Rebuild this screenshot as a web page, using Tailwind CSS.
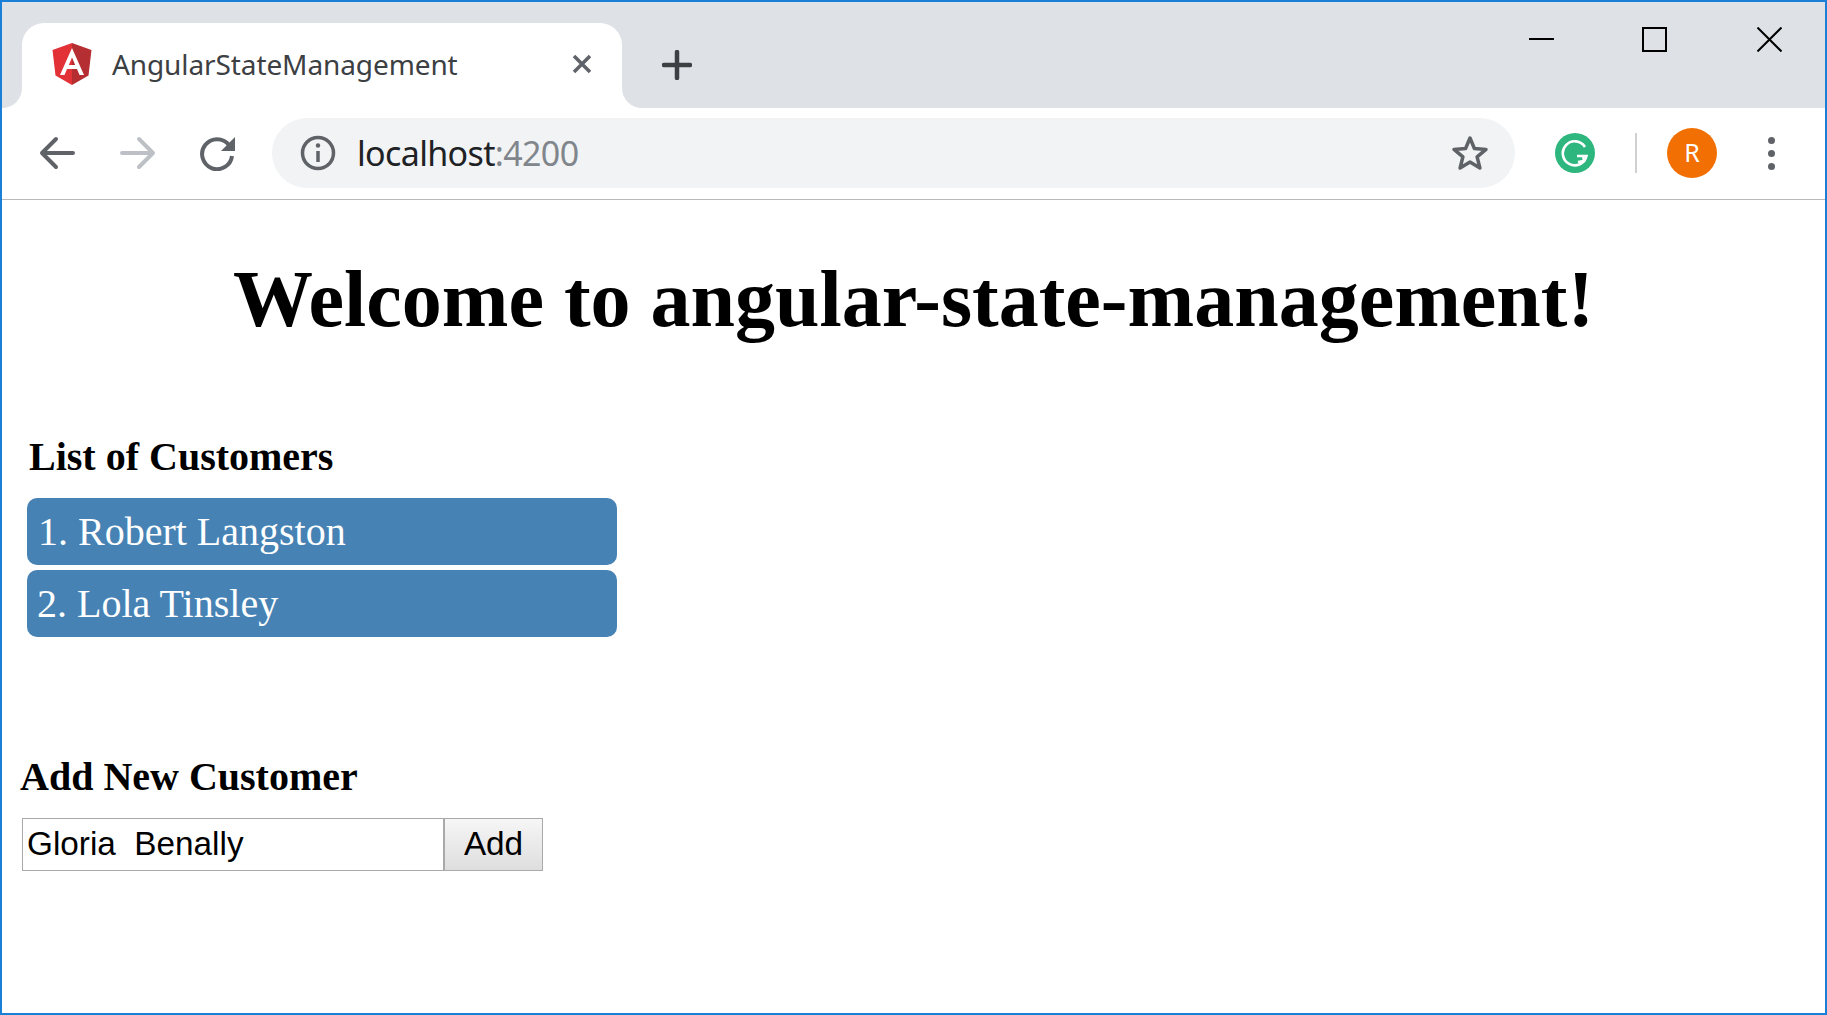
<!DOCTYPE html>
<html lang="en">
  <head>
    <meta charset="UTF-8" />
    <title>AngularStateManagement</title>
    <script src="https://cdn.jsdelivr.net/npm/@tailwindcss/browser@4"></script>
  </head>
  <body class="bg-white overflow-hidden">
    <div class="h-[1015px] box-border border-2 border-[#1a7fd6] flex flex-col font-['Liberation_Serif',serif] text-black">
      <!-- tab strip -->
      <header class="h-[106px] flex bg-white shrink-0">
        <div class="w-[20px] bg-[#dee1e6] rounded-br-[20px]"></div>
        <div class="w-[600px] bg-[#dee1e6] pt-[21px]">
          <div class="h-[85px] bg-white rounded-t-[22px] flex items-center pl-[30px] pb-[3px] font-['Noto_Sans',sans-serif]">
            <svg class="w-[40px] h-[42px] shrink-0" viewBox="0 0 40 42">
              <path d="M20 0 L0.5 7 L3.500 32.500 L20 42 Z" fill="#e23237" />
              <path d="M20 0 L39.500 7 L36.500 32.500 L20 42 Z" fill="#b52e31" />
              <path d="M20 5 L8 32 H12.500 L15 26 H25 L27.500 32 H32 Z M16.800 22 L20 14.500 L23.200 22 Z" fill="#fff" fill-rule="evenodd" />
            </svg>
            <span class="ml-[20px] text-[28px] leading-none text-[#3c4043] w-[460px] whitespace-nowrap tracking-[-0.1px]">AngularStateManagement</span>
            <svg class="w-[20px] h-[20px] shrink-0" viewBox="0 0 20 20" stroke="#5f6368" stroke-width="3.500" fill="none">
              <path d="M2 2 L18 18 M18 2 L2 18" />
            </svg>
          </div>
        </div>
        <div class="flex-1 bg-[#dee1e6] rounded-bl-[20px] flex justify-between">
          <div class="pl-[40px] pt-[48px]">
            <svg class="w-[30px] h-[30px]" viewBox="0 0 30 30" stroke="#3c4043" stroke-width="4.500" stroke-linecap="round" fill="none">
              <path d="M15 2 V28 M2 15 H28" />
            </svg>
          </div>
          <div class="flex pt-[25px] pr-[43px]">
            <svg class="w-[25px] h-[25px]" viewBox="0 0 25 25" stroke="#000" stroke-width="2" fill="none"><path d="M0 12 H25" /></svg>
            <svg class="w-[25px] h-[25px] ml-[88px]" viewBox="0 0 25 25" stroke="#000" stroke-width="2" fill="none"><rect x="1" y="1" width="23" height="23" /></svg>
            <svg class="w-[25px] h-[25px] ml-[90px]" viewBox="0 0 25 25" stroke="#000" stroke-width="2" fill="none"><path d="M0.500 0.500 L24.500 24.500 M24.500 0.500 L0.500 24.500" /></svg>
          </div>
        </div>
      </header>

      <!-- toolbar -->
      <nav class="h-[92px] shrink-0 border-b border-[#b8babc] flex items-center pl-[37px] pb-[1px]">
        <svg class="w-[36px] h-[34px]" viewBox="0 0 36 34" stroke="#5f6368" stroke-width="4" stroke-linecap="round" stroke-linejoin="round" fill="none">
          <path d="M34 17 H3 M17 3 L3 17 L17 31" />
        </svg>
        <svg class="w-[36px] h-[34px] ml-[45px]" viewBox="0 0 36 34" stroke="#bdc1c6" stroke-width="4" stroke-linecap="round" stroke-linejoin="round" fill="none">
          <path d="M2 17 H33 M19 3 L33 17 L19 31" />
        </svg>
        <svg class="w-[36px] h-[36px] ml-[44px]" viewBox="0 0 36 36" fill="none">
          <path d="M29 10 A15 15 0 1 0 32 21" stroke="#5f6368" stroke-width="4" />
          <path d="M35 2 V16 H21 Z" fill="#5f6368" />
        </svg>
        <div class="ml-[36px] w-[1243px] h-[70px] rounded-full bg-[#f1f3f4] flex items-center pl-[28px] pr-[26px] shrink-0">
          <svg class="w-[36px] h-[36px] shrink-0" viewBox="0 0 36 36" fill="none">
            <circle cx="18" cy="18" r="15.500" stroke="#5f6368" stroke-width="3.500" />
            <path d="M18 16 V27" stroke="#5f6368" stroke-width="3.500" />
            <circle cx="18" cy="10.500" r="2.200" fill="#5f6368" />
          </svg>
          <span class="ml-[21px] font-['Noto_Sans',sans-serif] text-[34px] leading-none text-[#202124] tracking-[-0.65px]">localhost<span class="text-[#80868b]">:4200</span></span>
          <svg class="w-[38px] h-[38px] ml-auto shrink-0" viewBox="0 0 38 38" fill="none">
            <path d="M19 4 L23.400 14.500 L35 15.400 L26.100 22.800 L28.900 34 L19 28 L9.100 34 L11.900 22.800 L3 15.400 L14.600 14.500 Z" stroke="#5f6368" stroke-width="3.500" stroke-linejoin="round" />
          </svg>
        </div>
        <div class="ml-[40px] w-[40px] h-[40px] rounded-full bg-[#2db67d] flex items-center justify-center shrink-0">
          <svg class="w-[28px] h-[28px]" viewBox="0 0 28 28" fill="none" stroke="#fff" stroke-width="2.600">
            <path d="M24 8 A12 12 0 1 0 25.500 17 H16" />
            <path d="M17 23 L23 22 L22 16" />
          </svg>
        </div>
        <div class="ml-[40px] w-[2px] h-[40px] bg-[#d0d0d0] shrink-0"></div>
        <div class="ml-[30px] w-[50px] h-[50px] rounded-full bg-[#f26f03] flex items-center justify-center text-white font-['Noto_Sans',sans-serif] text-[25px] shrink-0">R</div>
        <div class="ml-[51px] flex flex-col gap-[6px] shrink-0">
          <span class="block w-[7px] h-[7px] rounded-full bg-[#5f6368]"></span>
          <span class="block w-[7px] h-[7px] rounded-full bg-[#5f6368]"></span>
          <span class="block w-[7px] h-[7px] rounded-full bg-[#5f6368]"></span>
        </div>
      </nav>

      <!-- app -->
      <main class="flex-1">
        <h1 class="text-center font-bold text-[80px] leading-none mt-[59px] whitespace-nowrap">Welcome to angular-state-management!</h1>

        <section class="mt-[98px] ml-[25px] w-[590px]">
          <h3 class="ml-[2px] font-bold text-[40px] leading-none">List of Customers</h3>
          <ul class="mt-[21px] flex flex-col gap-[5px]">
            <li class="h-[67px] rounded-[10px] bg-[#4682b4] text-white text-[40px] leading-[68px] pl-[11px]">1. Robert Langston</li>
            <li class="h-[67px] rounded-[10px] bg-[#4682b4] text-white text-[40px] leading-[68px] pl-[10px]">2. Lola Tinsley</li>
          </ul>
        </section>

        <section class="mt-[120px] ml-[18px]">
          <h3 class="font-bold text-[40px] leading-none">Add New Customer</h3>
          <div class="flex mt-[21px] ml-[2px]">
            <input type="text" value="Gloria  Benally" class="w-[422px] h-[53px] border border-[#a9a9a9] px-[4px] pb-[2px] text-[33.3px] font-['Liberation_Sans',sans-serif] text-black outline-none" />
            <button class="w-[99px] h-[53px] border border-[#a9a9a9] pb-[2px] bg-linear-to-b from-[#f6f6f6] to-[#dedede] text-[33.3px] font-['Liberation_Sans',sans-serif] text-black">Add</button>
          </div>
        </section>
      </main>
    </div>
  </body>
</html>
